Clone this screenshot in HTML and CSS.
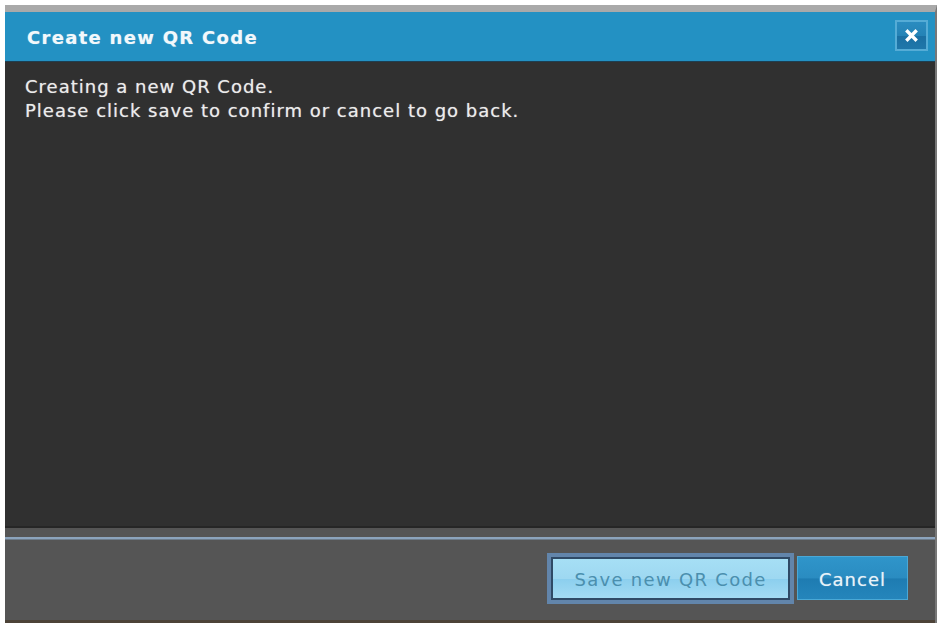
FILE: index.html
```html
<!DOCTYPE html>
<html>
<head>
<meta charset="utf-8">
<title>Create new QR Code</title>
<link rel="stylesheet" href="styles.css">
</head>
<body>
<div class="dialog">
  <div class="titlebar">
    <span class="title">Create new QR Code</span>
    <button class="close" aria-label="Close">
      <svg width="13" height="13" viewBox="0 0 13 13"><path d="M2.5 2.5 L10.5 10.5 M10.5 2.5 L2.5 10.5" stroke="#fff" stroke-width="3.4" stroke-linecap="square"/></svg>
    </button>
  </div>
  <div class="content">
    <p>Creating a new QR Code.<br>Please click save to confirm or cancel to go back.</p>
  </div>
  <div class="footer">
    <div class="actions">
      <button class="btn btn-save">Save new QR Code</button>
      <button class="btn btn-cancel">Cancel</button>
    </div>
  </div>
</div>
</body>
</html>
```
FILE: styles.css
```css
html, body {
  margin: 0;
  height: 100%;
  background: #ffffff;
}

body {
  padding: 5px 0 0 5px;
  box-sizing: border-box;
  font-family: "DejaVu Sans", Verdana, sans-serif;
}

.dialog {
  height: 100%;
  display: flex;
  flex-direction: column;
  background: #303030;
  border-top: 7px solid #a9a9a9;
  border-right: 2px solid #777;
  box-sizing: border-box;
}

.titlebar {
  height: 49px;
  flex: none;
  display: flex;
  align-items: center;
  justify-content: space-between;
  background: #2391c3;
  border-bottom: 1px solid #1d3f52;
  padding: 0 7px 0 22px;
}

.title {
  color: #f2f8fb;
  font-weight: bold;
  font-size: 18px;
  letter-spacing: 1.3px;
  margin-top: 2px;
  text-shadow: 0 0 1px rgba(242, 248, 251, 0.5);
}

.close {
  width: 33px;
  height: 31px;
  margin-top: -2px;
  padding: 0;
  display: flex;
  align-items: center;
  justify-content: center;
  border: 2px solid #55acd6;
  background: linear-gradient(#2a8cc0 0%, #2483b6 50%, #1a6fa2 51%, #1f77aa 100%);
  box-sizing: border-box;
}

.content {
  flex: 1;
  border-bottom: 2px solid #262626;
}

.content p {
  margin: 13px 0 0 20px;
  color: #ececec;
  font-size: 18px;
  letter-spacing: 1px;
  line-height: 24px;
  text-shadow: 0 0 1px rgba(236, 236, 236, 0.6);
}

.footer {
  flex: none;
  height: 92px;
  background: #555555;
  border-bottom: 3px solid #4d4338;
  display: flex;
  flex-direction: column;
}

.footer::before {
  content: "";
  display: block;
  height: 2px;
  margin-top: 9px;
  background: #8ca4bd;
  box-shadow: 0 1px 0 #6e7c8a;
}

.actions {
  display: flex;
  justify-content: flex-end;
  align-items: center;
  gap: 7px;
  padding: 17px 27px 0 0;
}

.btn {
  font-family: "DejaVu Sans", Verdana, sans-serif;
  font-size: 18px;
  height: 43px;
  padding: 2px 0 0;
  box-sizing: border-box;
  cursor: pointer;
}

.btn-save {
  width: 239px;
  color: #4b8fae;
  letter-spacing: 1.3px;
  background: linear-gradient(#a6dff5 0%, #9ed8f1 50%, #8ccfee 52%, #a3dbf3 100%);
  border: 2px solid #2f4a66;
  outline: 4px solid #6285ab;
}

.btn-cancel {
  width: 111px;
  height: 44px;
  color: #e8f3f9;
  letter-spacing: 1px;
  text-shadow: 0 0 1px rgba(232, 243, 249, 0.6);
  background: linear-gradient(#2f95ca 0%, #2a8cc1 50%, #1e7cb2 52%, #2585bb 100%);
  border: 1px solid #4aa8d6;
}
```
